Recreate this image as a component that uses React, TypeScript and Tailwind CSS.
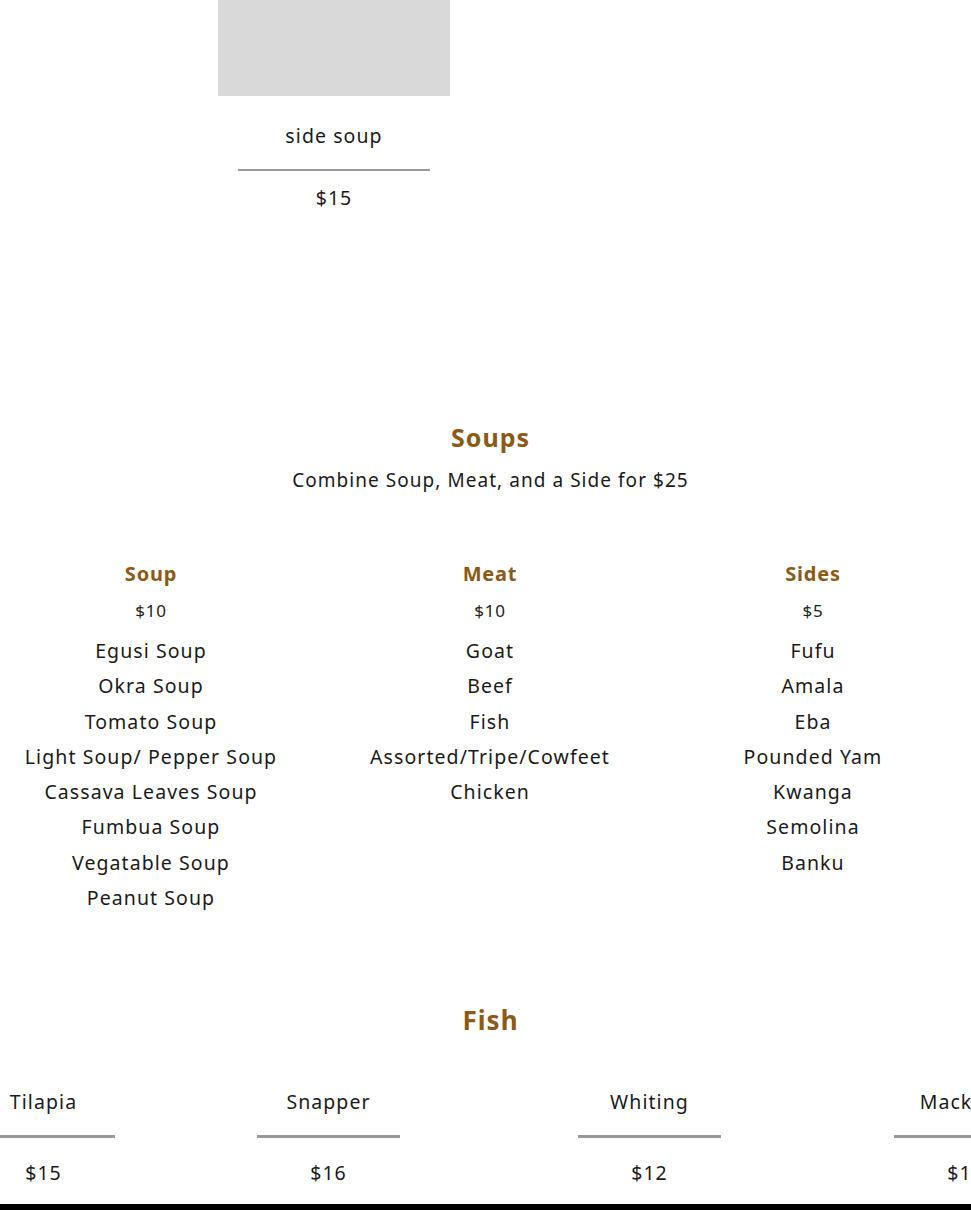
const SOUPS = [
  'Egusi Soup',
  'Okra Soup',
  'Tomato Soup',
  'Light Soup/ Pepper Soup',
  'Cassava Leaves Soup',
  'Fumbua Soup',
  'Vegatable Soup',
  'Peanut Soup',
]
const MEATS = ['Goat', 'Beef', 'Fish', 'Assorted/Tripe/Cowfeet', 'Chicken']
const SIDES = ['Fufu', 'Amala', 'Eba', 'Pounded Yam', 'Kwanga', 'Semolina', 'Banku']

function Column({ title, price, items }: { title: string; price: string; items: string[] }) {
  return (
    <div className="flex flex-col items-center">
      <h3 className="text-[20px] leading-[26px] font-bold tracking-[0.04em] text-[#8b5a16]">{title}</h3>
      <div className="mt-[11px] text-[17px] leading-[26px] tracking-[0.05em] text-[#222]">{price}</div>
      <ul className="mt-[9px] flex flex-col items-center">
        {items.map(item => (
          <li key={item} className="text-[19.5px] leading-[35.3px] tracking-[0.055em] text-[#1a1a1a] whitespace-nowrap">
            {item}
          </li>
        ))}
      </ul>
    </div>
  )
}

function FishItem({ name, price, className }: { name: string; price: string; className: string }) {
  return (
    <div className={`flex flex-col items-center w-[143px] shrink-0 ${className}`}>
      <div className="text-[19.5px] leading-[30px] tracking-[0.055em] text-[#1a1a1a] whitespace-nowrap">{name}</div>
      <div className="mt-[18px] w-full h-[3px] bg-[#999]" />
      <div className="mt-[20px] text-[19.5px] leading-[30px] tracking-[0.055em] text-[#1a1a1a]">{price}</div>
    </div>
  )
}

export default function App() {
  return (
    <div className="w-[971px] h-[1210px] overflow-hidden bg-white flex flex-col font-['Noto_Sans',sans-serif]">

      {/* Side soup card */}
      <div className="pl-[218px] flex">
        <div className="w-[232px] flex flex-col items-center">
          <div className="w-full h-[96px] bg-[#d9d9d9]" />
          <div className="mt-[25px] text-[19.5px] leading-[30px] tracking-[0.055em] text-[#1a1a1a]">side soup</div>
          <div className="mt-[18px] w-[192px] h-[2px] bg-[#999]" />
          <div className="mt-[12px] text-[19.5px] leading-[30px] tracking-[0.055em] text-[#1a1a1a]">$15</div>
        </div>
      </div>

      {/* Soups */}
      <section className="mt-[208px] pl-[10px] flex flex-col items-center">
        <h2 className="text-[25px] leading-[32px] font-bold tracking-[0.04em] text-[#8b5a16]">Soups</h2>
        <p className="mt-[14px] text-[19px] leading-[26px] tracking-[0.055em] text-[#1a1a1a]">
          Combine Soup, Meat, and a Side for $25
        </p>
      </section>

      <div className="mt-[68px] grid grid-cols-[302px_376px_270px]">
        <Column title="Soup" price="$10" items={SOUPS} />
        <Column title="Meat" price="$10" items={MEATS} />
        <Column title="Sides" price="$5" items={SIDES} />
      </div>

      {/* Fish */}
      <section className="mt-[88px] pl-[10px] flex flex-col items-center">
        <h2 className="text-[26px] leading-[34px] font-bold tracking-[0.04em] text-[#8b5a16]">Fish</h2>
      </section>

      <div className="mt-[50px] flex">
        <FishItem name="Tilapia" price="$15" className="-ml-[28px]" />
        <FishItem name="Snapper" price="$16" className="ml-[142px]" />
        <FishItem name="Whiting" price="$12" className="ml-[178px]" />
        <FishItem name="Mackerel" price="$15" className="ml-[173px]" />
      </div>

      <div className="mt-auto h-[6px] bg-black" />
    </div>
  )
}
